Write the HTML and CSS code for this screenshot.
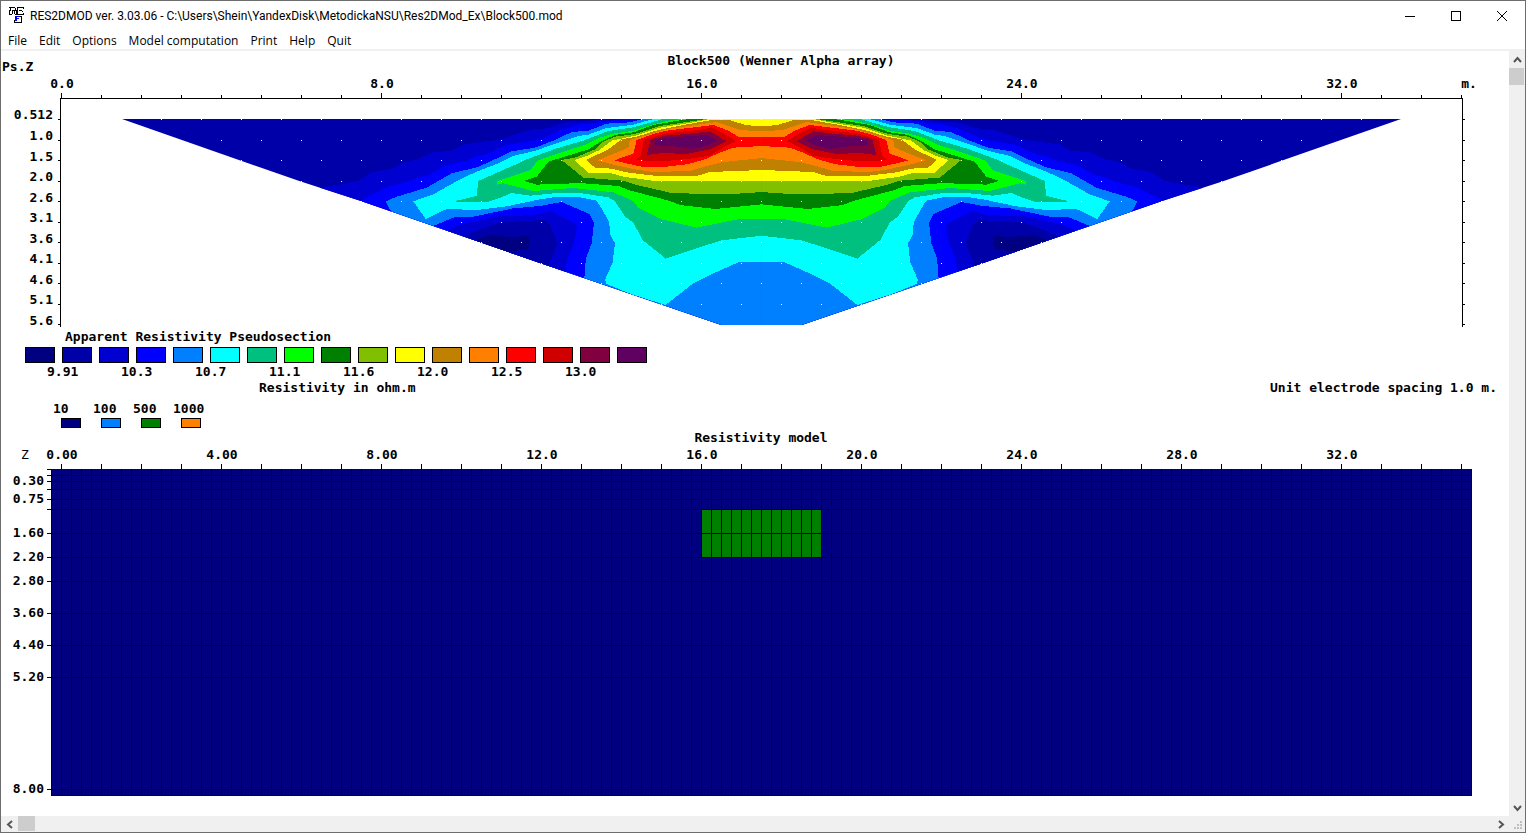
FILE: index.html
```html
<!DOCTYPE html>
<html lang="en">
<head>
<meta charset="utf-8">
<title>RES2DMOD ver. 3.03.06</title>
<link rel="stylesheet" href="styles.css">
</head>
<body>
<div class="window">
  <header class="titlebar">
    <svg class="app-icon" width="16" height="18" viewBox="0 0 16 18" fill="none" shape-rendering="crispEdges" aria-hidden="true">
      <path stroke="#000" d="M0 .5h6M1.500 1v3M0 3.500h1M.5 4v3M0 7.500h3M3.500 4v3M6.500 1v2M3 3.500h4M5.500 4v3M6 7.500h2M7.500 3v4M8 .5h6M8.500 1v6M14.500 0v2M10 3.500h3M13.500 4v1M8 7.500h6M14.500 6v2M5 15.500h8M5.500 13v2M12.500 9v6M11 9.500h2"/>
      <path stroke="#00f" d="M6.500 9v5M6 9.500h5M7 11.500h3M7.500 9v5"/>
    </svg>
    <h1 class="caption">RES2DMOD ver. 3.03.06 - C:\Users\Shein\YandexDisk\MetodickaNSU\Res2DMod_Ex\Block500.mod</h1>
    <div class="window-buttons">
      <button type="button" aria-label="Minimize"><svg width="10" height="10" shape-rendering="crispEdges"><path d="M0 5.500h10"/></svg></button>
      <button type="button" aria-label="Maximize"><svg width="10" height="10" shape-rendering="crispEdges"><path d="M.5 .5h9v9h-9z"/></svg></button>
      <button type="button" aria-label="Close"><svg width="10" height="10"><path d="M0 0l10 10M10 0L0 10"/></svg></button>
    </div>
  </header>
  <nav class="menu">
    <button type="button">File</button>
    <button type="button">Edit</button>
    <button type="button">Options</button>
    <button type="button">Model computation</button>
    <button type="button">Print</button>
    <button type="button">Help</button>
    <button type="button">Quit</button>
  </nav>
  <div class="workspace">
    <main class="canvas">
      <svg class="plot" viewBox="1 51 1508 279" role="img" aria-label="Apparent resistivity pseudosection">
        <defs>
          <clipPath id="outline"><path d="M-534 27L0 214L185 274L720 459L1264 645H1386V27z"/></clipPath>
          <g id="half" clip-path="url(#outline)">
            <path fill="#0000a8" d="M-534 27H1386V645H-534z"/>
            <path fill="#0000d0" d="M60 232L125 223L175 212L215 187L280 175L310 157L350 149L400 126L455 123L490 103L600 89L660 69L690 59L745 54L790 38L850 35L900 27H1386V645H60z"/>
            <path fill="#0000ff" d="M185 270L255 233L330 213L350 203L385 196L440 165L500 152L530 139L560 133L620 105L700 92L720 88L780 60L840 43L910 36L960 27H1386V645H185z"/>
            <path fill="#0080ff" d="M257 274L290 260L380 233L455 190L530 172L570 155L635 124L705 113L770 88L815 66L865 62L920 41L990 37L1030 27H1386V645H275V308z"/>
            <path fill="#00ffff" d="M340 274L400 253L480 208L530 185L600 158L640 138L710 121L760 103L835 78L865 74L920 54L1000 44L1060 27H1386V457H1315L1245 488L1180 520L1097 585L995 553L920 522L915 510L938 458L945 400L930 372L928 337L905 295L890 272L840 262L775 260L720 268L620 289L530 300L440 297L377 327z"/>
            <path fill="#00c080" d="M462 274L530 258L535 213L600 184L660 158L675 150L720 133L770 115L850 92L925 63L1000 52L1050 38L1090 27H1386V377L1265 391L1180 418L1097 446L1028 390L1000 338L975 320L945 274L925 262L840 249L780 248L690 257L635 249L600 264L560 277L500 277z"/>
            <path fill="#00ff00" d="M590 214L640 197L692 180L712 152L740 142L800 122L860 103L900 83L940 71L1000 62L1060 43L1110 31L1150 27H1386V328H1315L1255 340L1190 353L1085 328L1015 293L1000 273L940 247L820 234L740 240L700 243L610 220L592 224z"/>
            <path fill="#008000" d="M672 213L710 200L745 155L775 146L865 118L905 93L945 75L1000 67L1060 45L1140 31L1170 27H1386V283L1245 297L1140 285L1110 273L985 240L955 228L850 220L770 221L710 224z"/>
            <path fill="#80c000" d="M785 150L825 143L885 118L910 95L945 80L1005 72L1080 48L1180 33L1220 27H1386V246L1300 252H1200L1110 248L1010 225L970 212L850 203z"/>
            <path fill="#ffff00" d="M823 150L860 138L895 122L935 92L1010 76L1080 53L1180 37L1230 27H1386V213H1065L970 200L935 190L865 188z"/>
            <path fill="#c08000" d="M858 150L925 118L965 88L1010 80L1075 60L1140 47L1240 29H1285L1340 46L1386 48V180L1230 186L1190 198H1070L980 187L935 176L885 173z"/>
            <path fill="#ff8000" d="M892 151L940 132L985 113L990 90L1060 70L1110 56L1250 36L1280 46L1320 60L1386 64V144L1310 152L1265 157L1220 168L1170 183L1060 186L1005 178L945 165z"/>
            <path fill="#ff0000" d="M943 151L1000 131L1010 90L1060 72L1100 62L1240 45L1285 62L1315 80H1386V108L1300 113L1260 128L1210 150L1160 163L1090 171H1030L1005 166z"/>
            <path fill="#d00000" d="M1005 151L1022 138L1032 88L1100 70L1210 58L1235 52L1270 70L1308 93L1260 118L1230 137L1170 146L1100 153z"/>
            <path fill="#800040" d="M1040 135L1052 88L1095 77L1160 72L1230 64L1280 94L1230 118L1160 132L1090 129z"/>
            <path fill="#600060" d="M1063 106L1070 88L1120 82L1220 75L1252 92L1220 107L1178 117L1125 109z"/>
            <path fill="#0000ff" d="M400 348L462 322L520 320L640 295L720 288L785 276L868 312L882 340L875 400L860 440L855 470L852 530L400 400z"/>
            <path fill="#0000d0" d="M445 360L485 343L600 318L700 316L755 304L832 345L822 400L800 450L798 520L445 400z"/>
            <path fill="#0000a8" d="M485 380L600 337L735 330L750 345L773 400L745 465V520L485 420z"/>
            <path fill="#000080" d="M530 390L565 376L640 381L685 378L690 400L683 417L625 425V460L530 420z"/>
          </g>
        </defs>
        <g shape-rendering="crispEdges">
          <use href="#half" transform="translate(300 110) scale(.3333)"/>
          <use href="#half" transform="translate(1223 110) scale(-.3333 .3333)"/>
        </g>
        <path class="samples" d="M121 119.500H1402M181 140.500H1342M241 160.500H1282M301 181.500H1222M361 201.500H1162M421 222.500H1102M481 242.500H1042M541 263.500H982M601 283.500H922M661 304.500H862"/>
        <g class="rule">
          <path d="M60.500 327V98.500H1462.500V327"/>
          <path d="M58 119.500h2M58 140.500h2M58 160.500h2M58 181.500h2M58 201.500h2M58 222.500h2M58 242.500h2M58 263.500h2M58 283.500h2M58 304.500h2M58 324.500h2"/>
          <path d="M1463 119.500h2M1463 140.500h2M1463 160.500h2M1463 181.500h2M1463 201.500h2M1463 222.500h2M1463 242.500h2M1463 263.500h2M1463 283.500h2M1463 304.500h2M1463 324.500h2"/>
          <path class="ticks" stroke-width="3" d="M61 96.500H1462"/>
          <path d="M61.500 93v5M381.500 93v5M701.500 93v5M1021.500 93v5M1341.500 93v5"/>
        </g>
        <g class="label middle">
          <text x="781" y="65">Block500 (Wenner Alpha array)</text>
          <text x="62" y="88">0.0</text><text x="382" y="88">8.0</text><text x="702" y="88">16.0</text><text x="1022" y="88">24.0</text><text x="1342" y="88">32.0</text><text x="1469" y="88">m.</text>
        </g>
        <text class="label" x="2" y="71">Ps.Z</text>
        <g class="label end">
          <text x="53" y="119">0.512</text><text x="53" y="140">1.0</text><text x="53" y="161">1.5</text><text x="53" y="181">2.0</text><text x="53" y="202">2.6</text><text x="53" y="222">3.1</text><text x="53" y="243">3.6</text><text x="53" y="263">4.1</text><text x="53" y="284">4.6</text><text x="53" y="304">5.1</text><text x="53" y="325">5.6</text>
        </g>
      </svg>

      <section class="legend">
        <h2 class="legend-title">Apparent Resistivity Pseudosection</h2>
        <ul class="scale">
          <li><i class="chip c0"></i><span>9.91</span></li>
          <li><i class="chip c1"></i></li>
          <li><i class="chip c2"></i><span>10.3</span></li>
          <li><i class="chip c3"></i></li>
          <li><i class="chip c4"></i><span>10.7</span></li>
          <li><i class="chip c5"></i></li>
          <li><i class="chip c6"></i><span>11.1</span></li>
          <li><i class="chip c7"></i></li>
          <li><i class="chip c8"></i><span>11.6</span></li>
          <li><i class="chip c9"></i></li>
          <li><i class="chip c10"></i><span>12.0</span></li>
          <li><i class="chip c11"></i></li>
          <li><i class="chip c12"></i><span>12.5</span></li>
          <li><i class="chip c13"></i></li>
          <li><i class="chip c14"></i><span>13.0</span></li>
          <li><i class="chip c15"></i></li>
          <li><i class="chip c16"></i></li>
        </ul>
        <div class="notes"><span>Resistivity in ohm.m</span><span>Unit electrode spacing 1.0 m.</span></div>
        <ul class="blocks">
          <li><span>10</span><i class="chip c0"></i></li>
          <li><span>100</span><i class="chip c4"></i></li>
          <li><span>500</span><i class="chip c8"></i></li>
          <li><span>1000</span><i class="chip c12"></i></li>
        </ul>
      </section>

      <svg class="plot" viewBox="1 430 1508 367" role="img" aria-label="Resistivity model">
        <defs>
          <pattern id="columns" patternUnits="userSpaceOnUse" x="51" y="469" width="10" height="400"><path fill="#000" d="M0 0h1v400H0z"/></pattern>
        </defs>
        <g shape-rendering="crispEdges">
          <path fill="#000080" d="M51 469H1472V796H51z"/>
          <path fill="#008000" d="M701 509H821V557H701z"/>
          <path fill="url(#columns)" d="M51 469H1472V796H51z"/>
        </g>
        <g class="rule">
          <path d="M47 469.500H51M47 475.500H1472M47 481.500H1472M47 489.500H1472M47 499.500H1472M47 509.500H1472M47 533.500H1472M47 557.500H1472M47 581.500H1472M47 613.500H1472M47 645.500H1472M47 677.500H1472M47 789.500H1472M51 795.500H1472"/>
          <path class="ticks" stroke-width="5" d="M61 466.500H1462"/>
        </g>
        <g class="label middle">
          <text x="761" y="442">Resistivity model</text>
          <text x="62" y="459">0.00</text><text x="222" y="459">4.00</text><text x="382" y="459">8.00</text><text x="542" y="459">12.0</text><text x="702" y="459">16.0</text><text x="862" y="459">20.0</text><text x="1022" y="459">24.0</text><text x="1182" y="459">28.0</text><text x="1342" y="459">32.0</text>
        </g>
        <text class="label light" x="21" y="459">Z</text>
        <g class="label end">
          <text x="44" y="485">0.30</text><text x="44" y="503">0.75</text><text x="44" y="537">1.60</text><text x="44" y="561">2.20</text><text x="44" y="585">2.80</text><text x="44" y="617">3.60</text><text x="44" y="649">4.40</text><text x="44" y="681">5.20</text><text x="44" y="793">8.00</text>
        </g>
      </svg>
    </main>
    <div class="scroll vertical">
      <button type="button" aria-label="Scroll up"><svg width="9" height="8"><path d="M1 6l3.500-4L8 6"/></svg></button>
      <span class="thumb"></span>
      <button type="button" class="far" aria-label="Scroll down"><svg width="9" height="8"><path d="M1 2l3.500 4L8 2"/></svg></button>
    </div>
    <div class="scroll horizontal">
      <button type="button" aria-label="Scroll left"><svg width="8" height="9"><path d="M6 1L2 4.500L6 8"/></svg></button>
      <span class="thumb"></span>
      <button type="button" class="far" aria-label="Scroll right"><svg width="8" height="9"><path d="M2 1l4 3.500L2 8"/></svg></button>
    </div>
    <div class="grip"><svg width="8" height="8" shape-rendering="crispEdges"><path fill="#bfbfbf" d="M6 0h2v2H6zM3 3h2v2H3zM6 3h2v2H6zM0 6h2v2H0zM3 6h2v2H3zM6 6h2v2H6z"/></svg></div>
  </div>
</div>
</body>
</html>
```
FILE: styles.css
```css
* { box-sizing: border-box; }

body {
  margin: 0;
  color: #000;
  background: #fff;
  font: 12px/16px "Open Sans", "Noto Sans", sans-serif;
}

button {
  padding: 0;
  border: 0;
  background: none;
  color: inherit;
  font: inherit;
}

ul { margin: 0; padding: 0; list-style: none; }

.window {
  display: flex;
  flex-direction: column;
  height: 100vh;
  border: 1px solid #6d6d6d;
}

.titlebar {
  display: flex;
  align-items: center;
  height: 30px;
  padding-left: 8px;
}

.app-icon { margin-right: 5px; }

.caption {
  flex: 1;
  margin: 0;
  font-family: Roboto, "Open Sans", sans-serif;
  font-size: 12px;
  font-weight: 400;
  white-space: nowrap;
}

.window-buttons { display: flex; height: 100%; }

.window-buttons button {
  display: grid;
  place-items: center;
  width: 46px;
}

.window-buttons path { fill: none; stroke: #000; }

.menu {
  display: flex;
  gap: 12px;
  height: 20px;
  padding: 2px 7px;
  border-bottom: 2px solid #f0f0f0;
}

.workspace {
  display: grid;
  flex: 1;
  grid-template-columns: minmax(0, 1fr) 16px;
  grid-template-rows: minmax(0, 1fr) 16px;
  min-height: 0;
}

.canvas {
  overflow: hidden;
  font: bold 13px/16px "DejaVu Sans Mono", "Liberation Mono", monospace;
}

.plot { display: block; width: 100%; height: auto; }

.label { fill: #000; }
.middle { text-anchor: middle; }
.end { text-anchor: end; }
.light { font-weight: 400; }

.rule { fill: none; stroke: #000; shape-rendering: crispEdges; }
.ticks { stroke-dasharray: 1 39; }
.samples { fill: none; stroke: #fff; stroke-dasharray: 1 39; shape-rendering: crispEdges; }

.legend { height: 100px; }

.legend-title {
  margin: 0;
  padding-left: 64px;
  font: inherit;
  line-height: 14px;
}

.scale {
  display: flex;
  gap: 7px;
  height: 34px;
  padding: 3px 24px 0;
}

.scale li { width: 30px; }
.scale span { display: block; padding-left: 22px; line-height: 18px; }

.chip { display: block; width: 30px; height: 16px; border: 1px solid #000; }

.notes {
  display: flex;
  justify-content: space-between;
  height: 20px;
  padding: 2px 12px 0 258px;
}

.blocks {
  display: flex;
  gap: 20px;
  padding: 3px 0 0 60px;
}

.blocks li { width: 20px; }
.blocks span { display: block; margin-left: -8px; }
.blocks .chip { width: 20px; height: 10px; margin-top: 1px; }

.c0 { background: #000080; }
.c1 { background: #0000a8; }
.c2 { background: #0000d0; }
.c3 { background: #0000ff; }
.c4 { background: #0080ff; }
.c5 { background: #00ffff; }
.c6 { background: #00c080; }
.c7 { background: #00ff00; }
.c8 { background: #008000; }
.c9 { background: #80c000; }
.c10 { background: #ffff00; }
.c11 { background: #c08000; }
.c12 { background: #ff8000; }
.c13 { background: #ff0000; }
.c14 { background: #d00000; }
.c15 { background: #800040; }
.c16 { background: #600060; }

.scroll { display: flex; background: #f0f0f0; }
.vertical { flex-direction: column; }
.scroll button { display: grid; flex: none; place-items: center; width: 17px; height: 17px; }
.vertical button { width: 16px; }
.horizontal button { height: 16px; }
.scroll path { fill: none; stroke: #555; stroke-width: 2; }
.thumb { flex: none; width: 17px; height: 17px; background: #cdcdcd; }
.vertical .thumb { width: 15px; }
.horizontal .thumb { height: 15px; }
.vertical .far { margin-top: auto; }
.horizontal .far { margin-left: auto; }

.grip {
  display: grid;
  place-items: end;
  padding: 3px;
  background: #f0f0f0;
}
```
